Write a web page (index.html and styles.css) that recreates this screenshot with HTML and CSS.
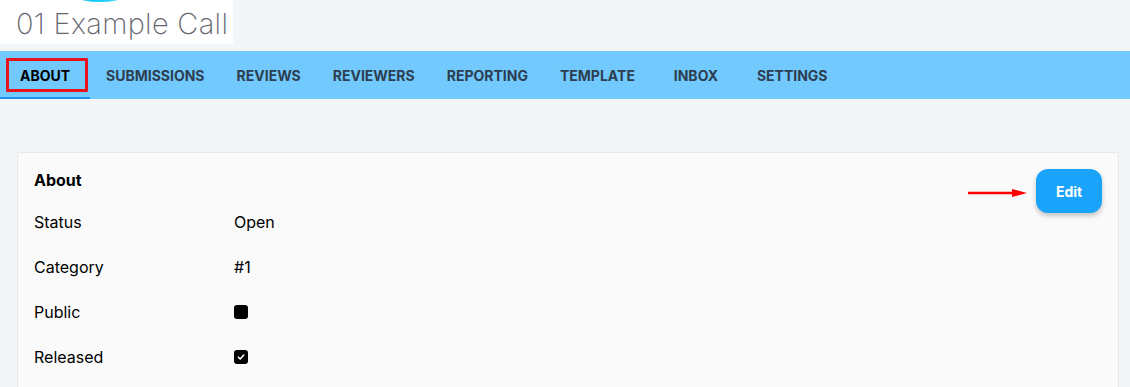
FILE: index.html
```html
<!DOCTYPE html>
<html lang="en">
<head>
    <meta charset="UTF-8">
    <meta name="viewport" content="width=device-width, initial-scale=1.0">
    <title>01 Example Call - About</title>
    <link rel="stylesheet" href="styles.css">
</head>
<body>
    <!-- Call header -->
    <div class="call-header">
        <div class="call-logo"></div>
        <h1 class="call-title">01 Example Call</h1>
    </div>

    <!-- Tabs -->
    <nav class="tabs">
        <a href="#" class="tab active">About</a>
        <a href="#" class="tab">Submissions</a>
        <a href="#" class="tab">Reviews</a>
        <a href="#" class="tab">Reviewers</a>
        <a href="#" class="tab">Reporting</a>
        <a href="#" class="tab">Template</a>
        <a href="#" class="tab">Inbox</a>
        <a href="#" class="tab">Settings</a>
    </nav>

    <div class="content">
        <div class="card">
            <div class="card-body">
                <h2>About</h2>
                <div class="row">
                    <span class="label">Status</span>
                    <span class="value">Open</span>
                </div>
                <div class="row">
                    <span class="label">Category</span>
                    <span class="value">#1</span>
                </div>
                <div class="row">
                    <span class="label">Public</span>
                    <span class="value"><span class="check"></span></span>
                </div>
                <div class="row">
                    <span class="label">Released</span>
                    <span class="value">
                        <span class="check">
                            <svg width="10" height="10" viewBox="0 0 10 10"><path d="M2.4 5.2 L4.2 7 L7.6 3.2" fill="none" stroke="#fff" stroke-width="1.6" stroke-linecap="round" stroke-linejoin="round"/></svg>
                        </span>
                    </span>
                </div>
            </div>
            <div class="card-actions">
                <span class="pointer-arrow">
                    <svg width="60" height="10" viewBox="0 0 60 10"><path d="M0 5 H46" stroke="#f00" stroke-width="2.5"/><path d="M44 1 L59 5 L44 9 Z" fill="#f00"/></svg>
                </span>
                <button class="btn-edit">Edit</button>
            </div>
        </div>
    </div>
</body>
</html>
```

FILE: styles.css
```css
body {
    margin: 0;
    font-family: Inter, "Noto Sans", sans-serif;
    background-color: #f3f6f9;
    color: #000;
}

.call-header {
    position: relative;
    width: 233px;
    height: 44px;
    background: #fff;
    margin-bottom: 7px;
    overflow: hidden;
}

/* bottom edge of the cropped logo image */
.call-logo {
    position: absolute;
    left: 58px;
    top: -40px;
    width: 84px;
    height: 42px;
    border-radius: 50%;
    background: linear-gradient(90deg, #9ae9ff, #10c8f5 40%, #2fd6ff 70%, #bdf2ff);
}

.call-title {
    margin: 0;
    padding: 6px 0 0 16px;
    font-size: 29px;
    font-weight: 200;
    line-height: 36px;
    color: #66666e;
    letter-spacing: 0.3px;
}

.tabs {
    display: flex;
    height: 48px;
    background-color: #72c9fe;
}

.tab {
    position: relative;
    display: flex;
    align-items: center;
    justify-content: center;
    min-width: 90px;
    padding: 0 16px;
    box-sizing: border-box;
    font-size: 14px;
    font-weight: 700;
    text-transform: uppercase;
    color: #2c3e50;
    text-decoration: none;
}

.tab.active {
    color: #000;
    border-bottom: 2px solid #1a94f0;
    padding-top: 2px;
}

/* red highlight around the current tab */
.tab.active::before {
    content: "";
    position: absolute;
    left: 6px;
    right: 2px;
    top: 7px;
    bottom: 5px;
    border: 3px solid #e8141c;
    border-radius: 1px;
}

.content {
    padding: 53px 11px 0 17px;
}

.card {
    display: flex;
    justify-content: space-between;
    align-items: flex-start;
    background: #fafafa;
    border: 1px solid #e7e9ec;
    padding: 16px;
    height: 300px;
}

h2 {
    margin: 0 0 8px;
    font-size: 16px;
    font-weight: 700;
    line-height: 22px;
}

.row {
    display: flex;
    align-items: center;
    height: 45px;
    font-size: 16px;
}

.label {
    width: 200px;
}

.value {
    display: flex;
    align-items: center;
}

.check {
    display: inline-flex;
    align-items: center;
    justify-content: center;
    width: 14px;
    height: 14px;
    border-radius: 3px;
    background: #000;
}

.card-actions {
    position: relative;
}

.pointer-arrow {
    position: absolute;
    right: 74px;
    top: 19px;
    line-height: 0;
}

.btn-edit {
    width: 66px;
    height: 44px;
    border: none;
    border-radius: 12px;
    background-color: #1aa3fb;
    color: #fff;
    font-family: Inter, sans-serif;
    font-size: 14px;
    font-weight: 700;
    box-shadow: 0 3px 5px rgba(0,0,0,0.22);
    cursor: pointer;
}
```
